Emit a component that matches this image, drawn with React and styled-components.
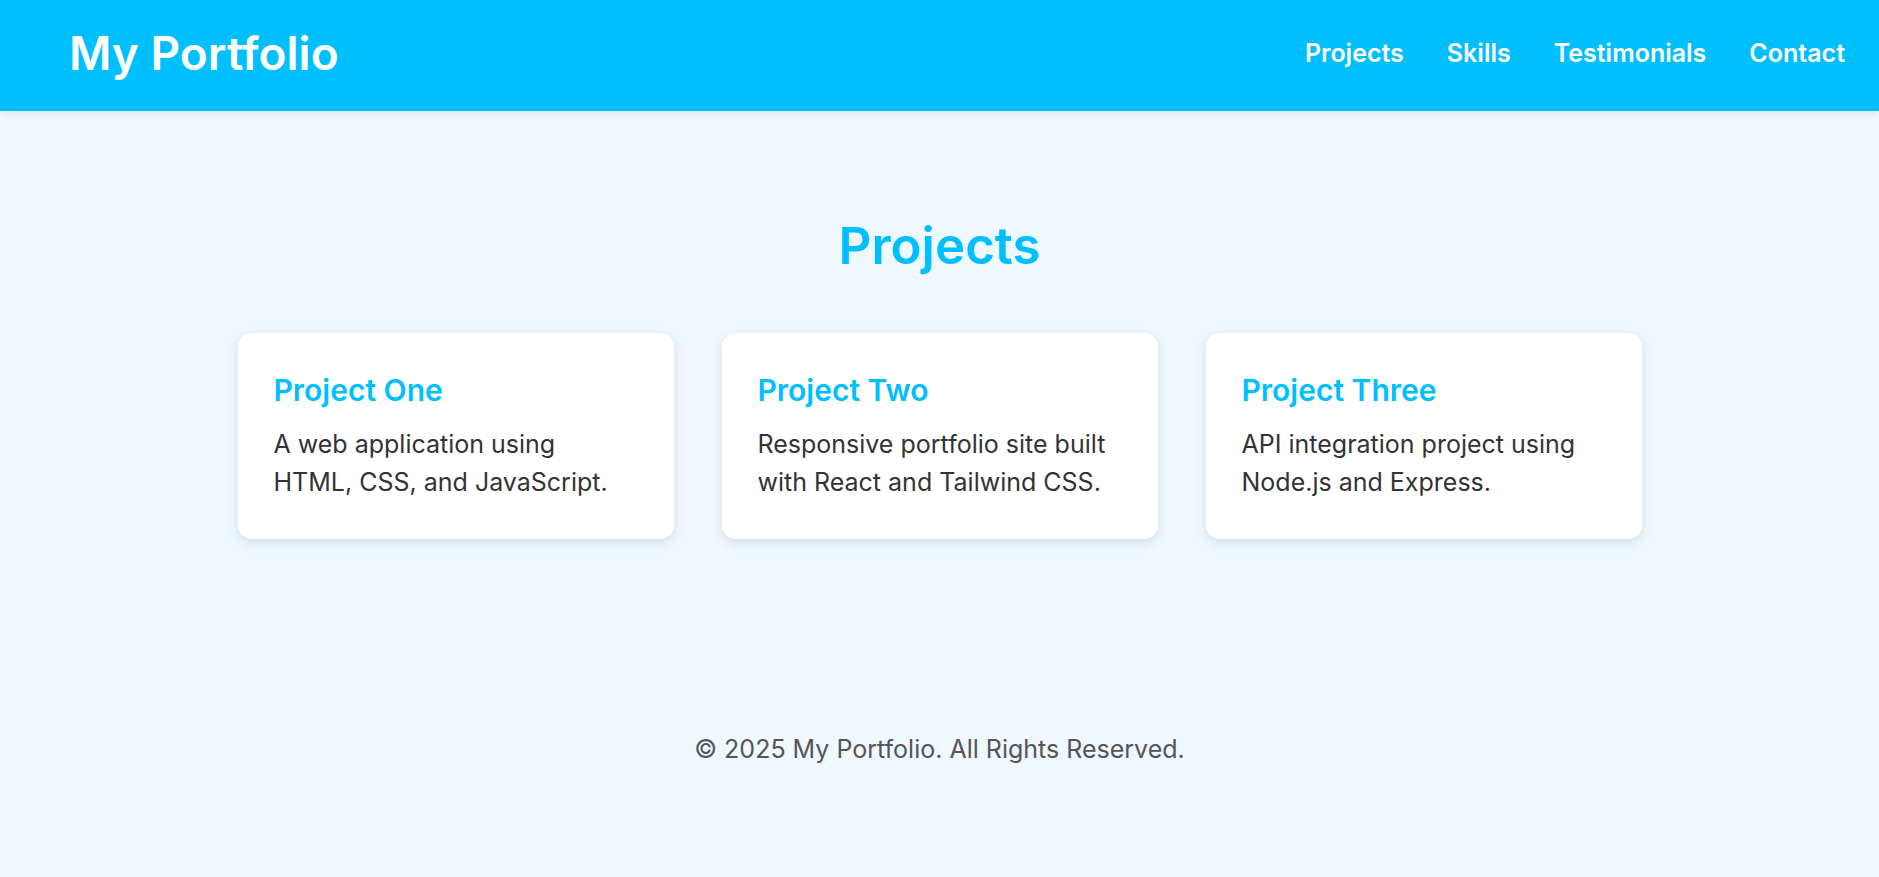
import React from 'react'
import styled, { createGlobalStyle } from 'styled-components'

const GlobalStyle = createGlobalStyle`
  * { box-sizing: border-box; }
  body {
    margin: 0;
    font-family: Inter, "Open Sans", sans-serif;
    background: #eff7ff;
    color: #333;
  }
`

const projects = [
  { title: 'Project One', text: 'A web application using HTML, CSS, and JavaScript.' },
  { title: 'Project Two', text: 'Responsive portfolio site built with React and Tailwind CSS.' },
  { title: 'Project Three', text: 'API integration project using Node.js and Express.' },
]

const App = () => {
  return (
    <>
      <GlobalStyle />
      <Header>
        <Logo>My Portfolio</Logo>
        <Nav>
          <NavLink href="#projects">Projects</NavLink>
          <NavLink href="#skills">Skills</NavLink>
          <NavLink href="#testimonials">Testimonials</NavLink>
          <NavLink href="#contact">Contact</NavLink>
        </Nav>
      </Header>
      <Section id="projects">
        <SectionTitle>Projects</SectionTitle>
        <CardGrid>
          {projects.map((p) => (
            <Card key={p.title}>
              <CardTitle>{p.title}</CardTitle>
              <CardText>{p.text}</CardText>
            </Card>
          ))}
        </CardGrid>
      </Section>
      <Footer>© 2025 My Portfolio. All Rights Reserved.</Footer>
    </>
  )
}

export default App

const Header = styled.header`
  height: 111px;
  background: #00bfff;
  display: flex;
  align-items: center;
  justify-content: space-between;
  padding: 0 34px 6px 69px;
  box-shadow: 0 2px 8px rgba(0, 0, 0, 0.1);
`

const Logo = styled.h1`
  margin: 0;
  color: #fff;
  font-size: 46px;
  font-weight: 600;
`

const Nav = styled.nav`
  display: flex;
  gap: 43px;
`

const NavLink = styled.a`
  color: #fff;
  text-decoration: none;
  font-size: 25px;
  font-weight: 600;
`

const Section = styled.section`
  padding: 102px 0 0;
  display: flex;
  flex-direction: column;
  align-items: center;
`

const SectionTitle = styled.h2`
  margin: 0 0 54px;
  color: #00bfff;
  font-size: 51px;
  font-weight: 600;
  line-height: 1.3;
`

const CardGrid = styled.div`
  display: grid;
  grid-template-columns: repeat(3, 436px);
  gap: 48px;
`

const Card = styled.div`
  background: #fff;
  border-radius: 14px;
  padding: 39px 36px 30px;
  height: 206px;
  box-shadow: 0 4px 12px rgba(0, 0, 0, 0.1);
`

const CardTitle = styled.h3`
  margin: 0 0 17px;
  color: #00bfff;
  font-size: 30px;
  font-weight: 600;
`

const CardText = styled.p`
  margin: 0;
  font-size: 25px;
  line-height: 38px;
  color: #333;
`

const Footer = styled.footer`
  margin-top: 195px;
  text-align: center;
  font-size: 25px;
  color: #555;
`
